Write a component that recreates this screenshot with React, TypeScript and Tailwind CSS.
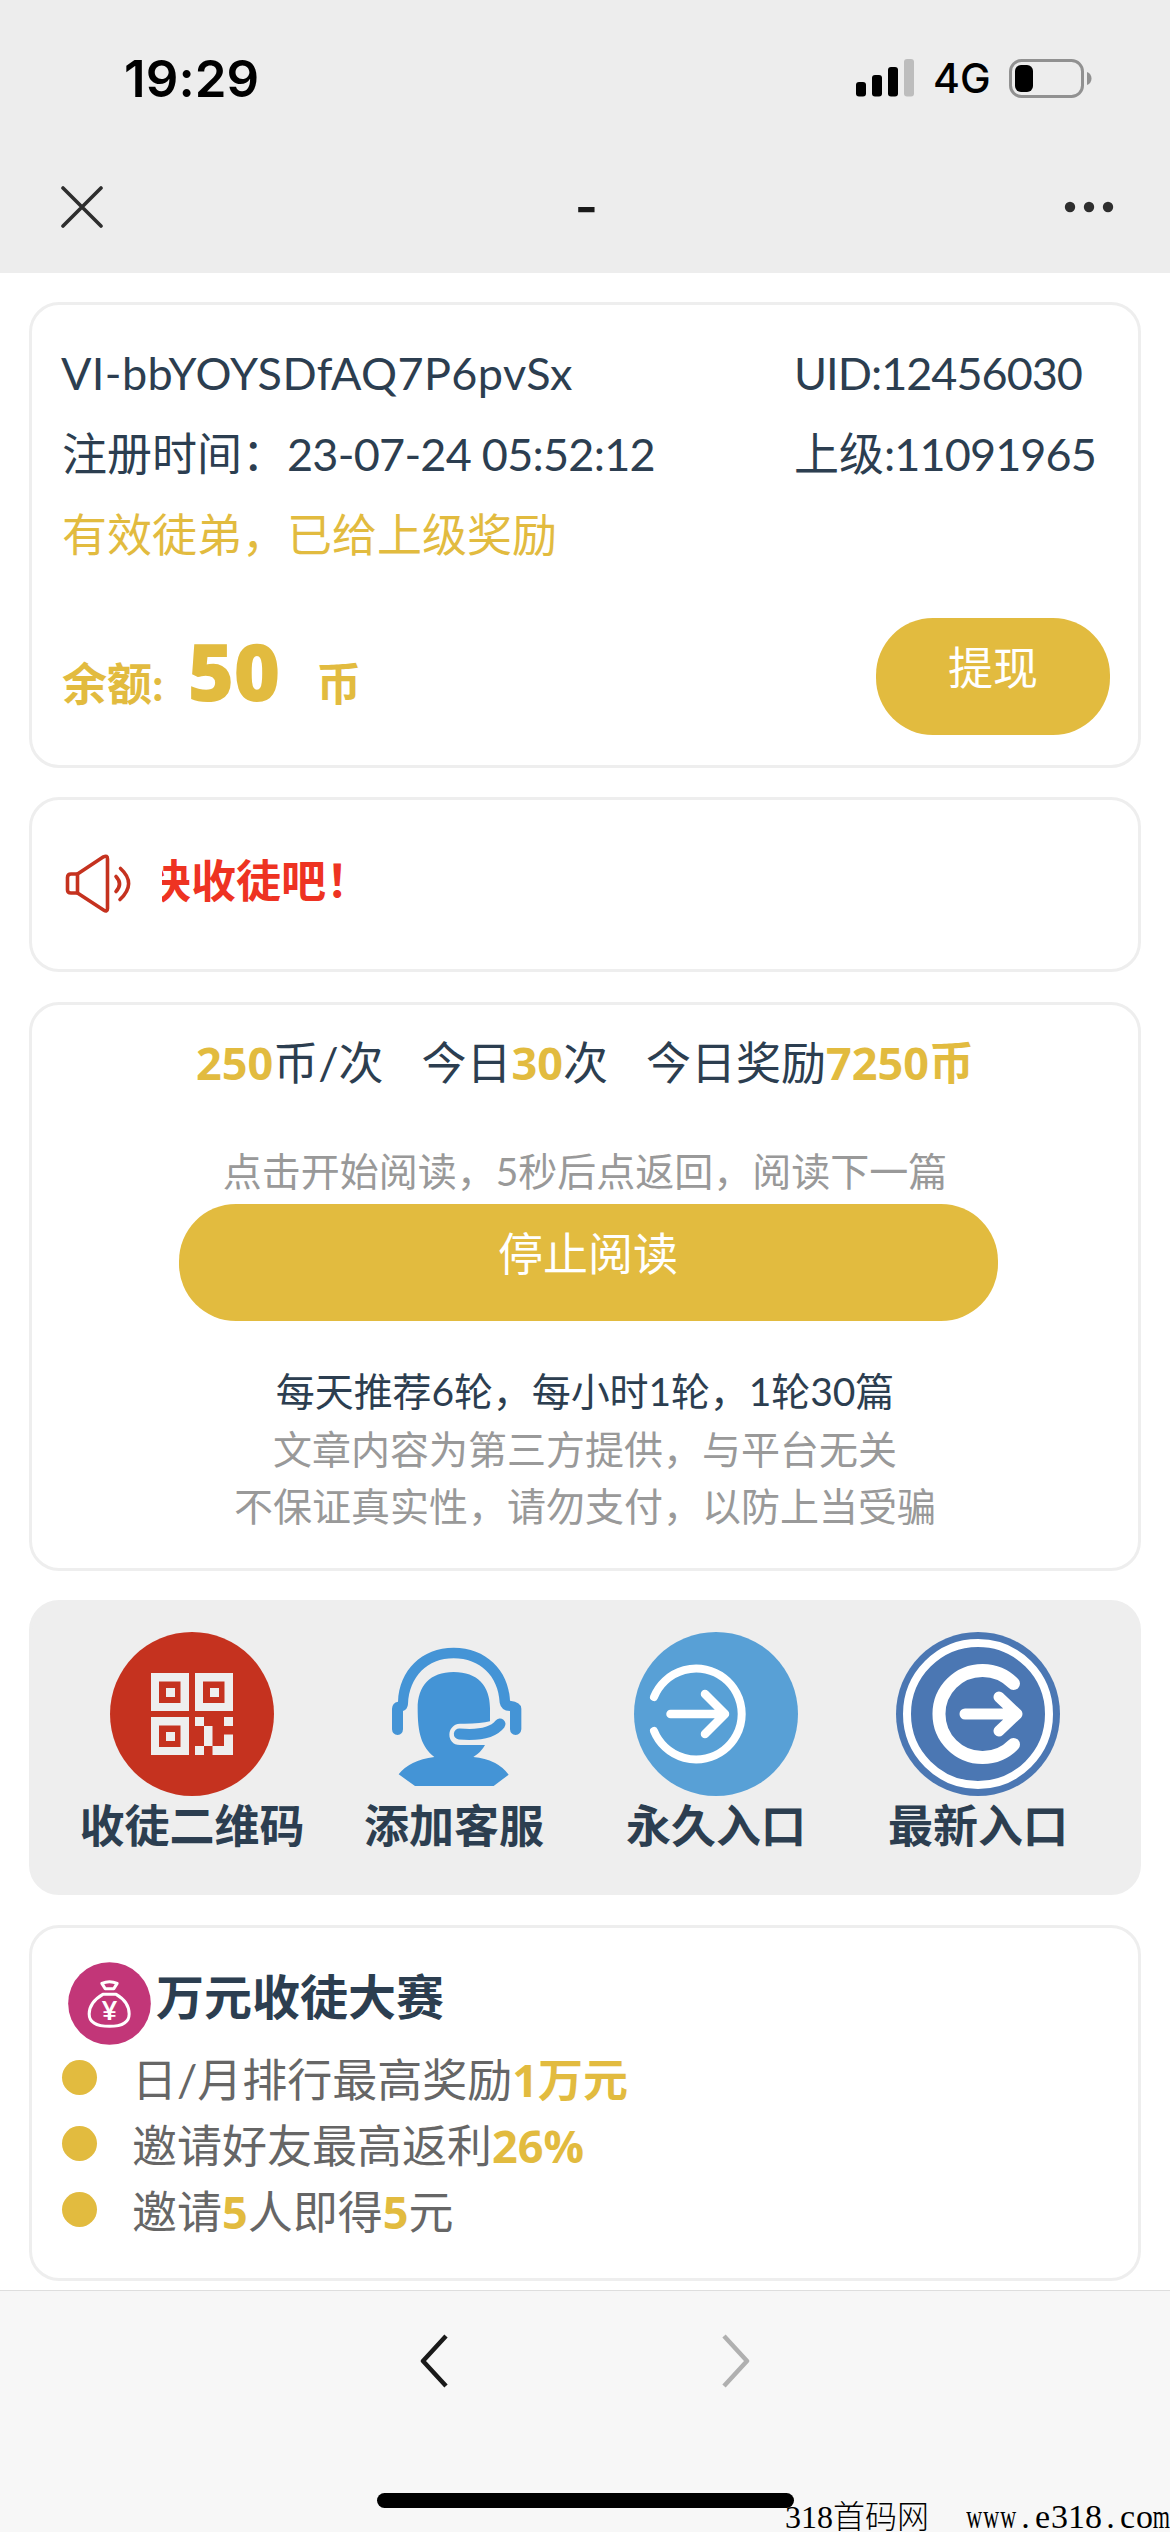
import React from 'react';

interface CardProps {
  className?: string;
  children: React.ReactNode;
}

const Card: React.FC<CardProps> = ({ className = '', children }) => (
  <section className={`w-[1112px] mx-auto shrink-0 rounded-[30px] border-[3px] border-[#eeeeee] ${className}`}>
    {children}
  </section>
);

const Gold: React.FC<{ children: React.ReactNode }> = ({ children }) => (
  <b className="font-['Open_Sans','Noto_Sans_CJK_SC',sans-serif] font-bold text-[#e2bb3f]">{children}</b>
);

const StatusBar = () => (
  <div className="flex h-[156px] items-center justify-between pl-[124px] pr-[78px]">
    <span className="font-[Inter] text-[51px] font-semibold leading-none tracking-[0.1px] text-black">19:29</span>
    <div className="flex items-center">
      <svg className="h-[38px] w-[58px]" viewBox="0 0 58 38">
        <rect x="0" y="23" width="10" height="14.500" rx="3" />
        <rect x="16" y="16" width="10" height="21.500" rx="3" />
        <rect x="32" y="8" width="10" height="29.500" rx="3" />
        <rect x="48" y="0" width="10" height="37.500" rx="3" fill="#bdbdbd" />
      </svg>
      <span className="ml-[19px] w-[57px] font-[Inter] text-[41px] font-medium leading-none text-black">4G</span>
      <svg className="ml-[19px] h-[39px] w-[83px]" viewBox="0 0 83 39">
        <rect x="1.500" y="1.500" width="72" height="36" rx="11" fill="none" stroke="#919191" strokeWidth="3" />
        <rect x="6" y="6" width="18" height="27" rx="6" />
        <path d="M78 13c6 2 6 11 0 13z" fill="#919191" />
      </svg>
    </div>
  </div>
);

const NavBar = () => (
  <div className="flex h-[102px] items-center justify-between pl-[61px] pr-[56px]">
    <svg className="h-[42px] w-[42px]" viewBox="0 0 42 42" stroke="#2e2e2e" strokeWidth="3.600" strokeLinecap="round">
      <path d="M2 2l38 38M40 2L2 40" />
    </svg>
    <span className="ml-[6px] font-[Inter] text-[50px] font-semibold leading-none text-[#1a1a1a]">-</span>
    <svg className="h-[12px] w-[50px]" viewBox="0 0 50 12" fill="#2e2e2e">
      <circle cx="6" cy="6" r="5.200" />
      <circle cx="25" cy="6" r="5.200" />
      <circle cx="44" cy="6" r="5.200" />
    </svg>
  </div>
);

const SpeakerIcon = () => (
  <svg className="-mt-[2px] h-[60px] w-[66px]" viewBox="0 0 66 60" fill="none" stroke="#c5321f" strokeWidth="3.600" strokeLinecap="round" strokeLinejoin="round">
    <path d="M12.500 20L38.500 2.800Q42.500 1 42.500 5V54.500Q42.500 58.500 38.500 56L12.500 39Z" />
    <path d="M12.500 20H6Q2.500 20 2.500 23.500V36Q2.500 39 6 39H12.500" />
    <path d="M51 22.500Q58 30 51 37.500" />
    <path d="M55.500 14.500Q72 29.500 55 45.500" />
  </svg>
);

const QrIcon = () => (
  <svg className="h-[164px] w-[164px]" viewBox="0 0 164 164">
    <circle cx="82" cy="82" r="82" fill="#c5321f" />
    {[[41, 41], [85, 41], [41, 85]].map(([x, y]) => (
      <g key={`${x}-${y}`} transform={`translate(${x} ${y})`}>
        <rect width="38" height="38" fill="#eee" />
        <rect x="8" y="8.500" width="21.500" height="21.500" fill="#c5321f" />
        <rect x="15" y="15" width="9" height="9" fill="#eee" />
      </g>
    ))}
    <path d="M85 85h9v9h-9zM114 85h9v9h-9zM94 94h8.500v20h-8.500zM85 114h9v9h-9zM114 102.500h9v20.500h-20.500v-9h11.500z" fill="#eee" />
  </svg>
);

const ServiceIcon = () => (
  <svg className="h-[164px] w-[164px]" viewBox="-24 6 492 492" fill="#4494d6">
    <path d="M54 215C58 120 125 53 221 53S386 120 390 212Q424 216 424 236V298Q422 314 407 315Q391 314 390 298V243Q363 242 359 218C355 138 300 85 221 85S88 140 84 222Q83 238 69 243V298Q68 314 53 315Q37 314 36 298V236Q37 218 54 215Z" />
    <path d="M221 126C293 126 330 168 330 235V274Q300 282 240 281C198 283 197 345 240 345H315Q304 366 280 381Q352 388 386 434L341 468H105L56 433Q88 391 163 381C124 350 113 310 113 235C113 168 150 126 221 126Z" />
    <path d="M238 312Q330 320 360 282" fill="none" stroke="#4494d6" strokeWidth="33" strokeLinecap="round" />
  </svg>
);

const PermanentIcon = () => (
  <svg className="h-[164px] w-[164px]" viewBox="0 0 164 164" fill="none" stroke="#fff" strokeLinecap="round" strokeLinejoin="round">
    <circle cx="82" cy="82" r="82" fill="#58a0d6" stroke="none" />
    <path d="M20 65A45.500 45.500 0 1 1 20 99" strokeWidth="8" />
    <path d="M36.500 82H91M71 62L91 82L71 102" strokeWidth="8.500" />
  </svg>
);

const LatestIcon = () => (
  <svg className="h-[164px] w-[164px]" viewBox="0 0 164 164" fill="none" stroke="#fff" strokeLinecap="round" strokeLinejoin="round">
    <circle cx="82" cy="82" r="82" fill="#4b77b3" stroke="none" />
    <circle cx="82" cy="82" r="71" strokeWidth="8" />
    <path d="M117.500 51.500A43.500 43.500 0 1 0 117.500 112.500" strokeWidth="13" />
    <path d="M69 82H121M103 65L121 82L103 99" strokeWidth="11" />
  </svg>
);

const MoneyBagIcon = () => (
  <svg className="h-[83px] w-[83px]" viewBox="53 37 246 249" fill="none" stroke="#fff" strokeWidth="9" strokeLinejoin="round">
    <circle cx="176" cy="161.500" r="124" fill="#c23678" stroke="none" />
    <path d="M163 117L153 101Q176 91 199 101L189 117Z" />
    <path d="M156 134H196C220 148 235 168 235 193C235 222 210 230 176 230S115 222 115 193C115 168 132 148 156 134Z" />
    <text x="176" y="212" textAnchor="middle" fill="#fff" stroke="none" className="font-[Lato] text-[80px] font-bold">¥</text>
  </svg>
);

const entries = [
  { label: '收徒二维码', icon: <QrIcon /> },
  { label: '添加客服', icon: <ServiceIcon /> },
  { label: '永久入口', icon: <PermanentIcon /> },
  { label: '最新入口', icon: <LatestIcon /> },
];

const perks = [
  <>日/月排行最高奖励<Gold>1万元</Gold></>,
  <>邀请好友最高返利<Gold>26%</Gold></>,
  <>邀请<Gold>5</Gold>人即得<Gold>5</Gold>元</>,
];

const Watermark = () => (
  <div className="absolute bottom-[-5px] left-[785px] flex whitespace-nowrap font-['Liberation_Serif','Noto_Sans_CJK_SC',serif] text-[34px] font-light leading-[40px] text-black">
    <span className="w-[151px] text-[32px]">318首码网</span>
    <span className="ml-[30px] flex">
      {'www.e318.com'.split('').map((char, i) => (
        <span key={i} className="flex w-[17px] justify-center">
          <span className={char === 'w' || char === 'm' ? 'scale-x-[0.650]' : ''}>{char}</span>
        </span>
      ))}
    </span>
  </div>
);

export default function App() {
  return (
    <div className="relative flex h-[2532px] w-[1170px] flex-col overflow-hidden bg-white font-[Lato,'Noto_Sans_CJK_SC',sans-serif] text-[45px] text-[#2c3e50]">
      <header className="h-[273px] shrink-0 bg-[#ededed]">
        <StatusBar />
        <NavBar />
      </header>

      <Card className="mt-[29px] h-[466px] px-[30px] pt-[28px]">
        <div className="grid grid-cols-[732px_1fr] leading-[81px] whitespace-nowrap">
          <span className="-ml-[1px] tracking-[0.4px]">VI-bbYOYSDfAQ7P6pvSx</span>
          <span className="tracking-[-1px]">UID:12456030</span>
          <span>注册时间：<span className="tracking-[-0.75px]">23-07-24 05:52:12</span></span>
          <span>上级<span className="tracking-[-0.9px]">:11091965</span></span>
          <span className="text-[#e2bb3f]">有效徒弟，已给上级奖励</span>
        </div>
        <div className="mt-[42px] flex justify-between">
          <div className="-mt-[7px] flex h-[117px] items-baseline font-bold leading-[117px] text-[#e2bb3f]">
            <span>余额:</span>
            <span className="ml-[24px] font-['Open_Sans'] text-[80px] font-extrabold tracking-[-1px]">50</span>
            <span className="ml-[37px]">币</span>
          </div>
          <button className="-mr-[2px] h-[117px] w-[234px] rounded-[57px] bg-[#e2bb3f] pb-[16px] text-white">提现</button>
        </div>
      </Card>

      <Card className="mt-[29px] flex h-[175px] items-center pl-[33px]">
        <SpeakerIcon />
        <div className="-mt-[6px] ml-[31px] flex overflow-hidden whitespace-nowrap">
          <span className="-ml-[16px] font-bold text-[#ee3322]">快收徒吧！</span>
        </div>
      </Card>

      <Card className="mt-[30px] flex h-[569px] flex-col items-center whitespace-nowrap pt-[28px]">
        <div className="flex gap-[38px] leading-[60px]">
          <span><Gold>250</Gold>币/次</span>
          <span>今日<Gold>30</Gold>次</span>
          <span>今日奖励<Gold>7250币</Gold></span>
        </div>
        <p className="mt-[49px] text-[39px] leading-[58px] text-[#999999]">点击开始阅读，5秒后点返回，阅读下一篇</p>
        <button className="ml-[6px] mt-[4px] h-[117px] w-[819px] rounded-[57px] bg-[#e2bb3f] pb-[16px] text-white">停止阅读</button>
        <div className="mt-[42px] text-center text-[39px] leading-[57.500px]">
          <p className="tracking-[-0.1px]">每天推荐6轮，每小时1轮，1轮30篇</p>
          <p className="text-[#999999]">文章内容为第三方提供，与平台无关</p>
          <p className="text-[#999999]">不保证真实性，请勿支付，以防上当受骗</p>
        </div>
      </Card>

      <Card className="mt-[29px] grid h-[295px] grid-cols-4 bg-[#eeeeee] px-[29px] pt-[29px]">
        {entries.map(({ label, icon }) => (
          <div key={label} className="flex flex-col items-center whitespace-nowrap font-bold leading-[60px]">
            {icon}
            <span>{label}</span>
          </div>
        ))}
      </Card>

      <Card className="mt-[30px] h-[356px] px-[30px] pt-[34px]">
        <div className="flex h-[85px] pl-[6px]">
          <MoneyBagIcon />
          <h2 className="ml-[5px] text-[48px] font-bold leading-[70px]">万元收徒大赛</h2>
        </div>
        <ul className="leading-[66px] text-[#666666]">
          {perks.map((perk, i) => (
            <li key={i} className="flex h-[66px] items-center gap-[35px]">
              <i className="-mt-[6px] h-[35px] w-[35px] rounded-full bg-[#e2bb3f]" />
              <span>{perk}</span>
            </li>
          ))}
        </ul>
      </Card>

      <footer className="mt-[9px] flex h-[242px] shrink-0 flex-col items-center border-t-[1.500px] border-[#dedede] bg-[#f7f7f7]">
        <div className="mt-[43px] flex w-[330px] justify-between">
          <svg className="h-[54px] w-[28px]" viewBox="0 0 28 54" fill="none" stroke="#1a1a1a" strokeWidth="4.500">
            <path d="M26 2L3 27L26 52" strokeLinejoin="round" />
          </svg>
          <svg className="h-[54px] w-[28px]" viewBox="0 0 28 54" fill="none" stroke="#b0b0b0" strokeWidth="4.500">
            <path d="M2 2L25 27L2 52" strokeLinejoin="round" />
          </svg>
        </div>
        <div className="mt-[105px] h-[15px] w-[417px] rounded-full bg-black" />
      </footer>
      <Watermark />
    </div>
  );
}
